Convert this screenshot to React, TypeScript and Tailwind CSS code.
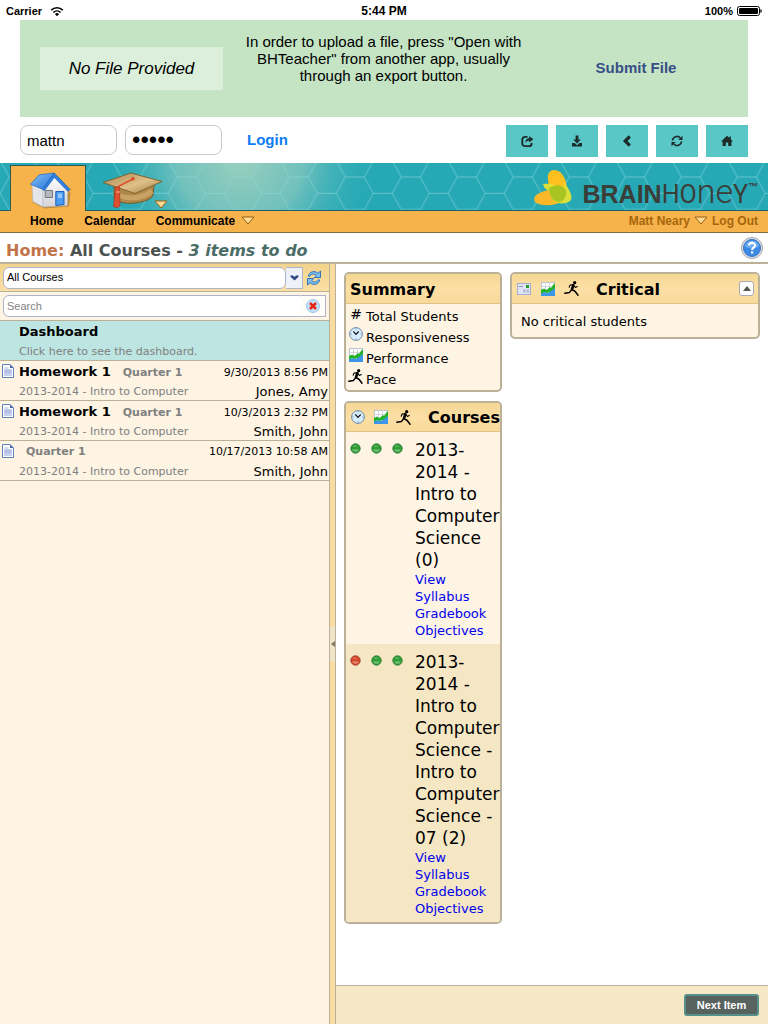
import type { ReactNode } from "react";

const verdana = "font-['DejaVu_Sans',sans-serif]";
const arial = "font-['Liberation_Sans',Arial,sans-serif]";

function Wifi() {
  return (
    <svg width="14" height="11" viewBox="0 0 14 11" fill="none" stroke="#000" aria-hidden="true">
      <path d="M1.2 4.1a8.4 8.4 0 0 1 11.6 0" strokeWidth="1.6" />
      <path d="M3.4 6.5a5.2 5.2 0 0 1 7.2 0" strokeWidth="1.6" />
      <path d="M7 10.2 4.9 8a3 3 0 0 1 4.2 0z" fill="#000" stroke="none" />
    </svg>
  );
}

function Battery() {
  return (
    <svg width="25" height="10" viewBox="0 0 25 10" aria-hidden="true">
      <rect x="0.5" y="0.5" width="22" height="9" rx="2" fill="none" stroke="#000" />
      <rect x="2" y="2" width="19" height="6" rx="1" />
      <path d="M23.4 3q1.4.6 1.4 2t-1.4 2z" />
    </svg>
  );
}

function ShareGlyph() {
  return (
    <svg width="13" height="13" viewBox="0 0 13 13" aria-hidden="true">
      <path d="M6.5 1.9H4A2.7 2.7 0 0 0 1.3 4.6v3.8A2.7 2.7 0 0 0 4 11.1h4.2a2.4 2.4 0 0 0 2.4-2.4V8" fill="none" stroke="#1d2b2b" strokeWidth="1.9" />
      <path d="M8.3 1 12.4 4.3 8.3 7.6V5.7C6.5 5.7 5.3 6.3 4.3 8 4.3 5 5.8 3.1 8.3 2.9z" fill="#1d2b2b" />
    </svg>
  );
}
function SaveGlyph() {
  return (
    <svg width="12" height="12" viewBox="0 0 12 12" fill="#1d2b2b" aria-hidden="true">
      <path d="M4.6 .5h2.8v4h2.4L6 8.6 2.2 4.5h2.4z" />
      <path d="M1 8h2.6L6 10.2 8.4 8H11v3.5H1z" />
    </svg>
  );
}
function BackGlyph() {
  return (
    <svg width="12" height="12" viewBox="0 0 12 12" fill="none" stroke="#1d2b2b" strokeWidth="3.2" aria-hidden="true">
      <path d="M8.8 1.4 4.2 6l4.6 4.6" />
    </svg>
  );
}
function RefreshGlyph() {
  return (
    <svg width="12" height="12" viewBox="0 0 12 12" fill="none" stroke="#1d2b2b" strokeWidth="1.7" aria-hidden="true">
      <path d="M1.5 5.5A4.5 4.5 0 0 1 9.3 3" />
      <path d="M10.5 6.5A4.5 4.5 0 0 1 2.7 9" />
      <path d="M11.5 .8v4.2H7.3zM.5 11.2V7h4.2z" fill="#1d2b2b" stroke="none" />
    </svg>
  );
}
function HomeGlyph() {
  return (
    <svg width="12" height="12" viewBox="0 0 12 12" fill="#1d2b2b" aria-hidden="true">
      <path d="M6 .8 8.3 3V1.5h1.6v3L12 6.6h-1.6V11H7.2V7.5H4.8V11H1.6V6.6H0z" />
    </svg>
  );
}

function House() {
  return (
    <svg width="42" height="37" viewBox="0 0 42 37" aria-hidden="true">
      <defs>
        <linearGradient id="roof" x1="0" y1="0" x2="1" y2="1">
          <stop offset="0" stopColor="#8cc4f8" />
          <stop offset="1" stopColor="#1b6fd9" />
        </linearGradient>
        <linearGradient id="wall" x1="0" y1="0" x2="0" y2="1">
          <stop offset="0" stopColor="#ffffff" />
          <stop offset="1" stopColor="#d3d3d8" />
        </linearGradient>
      </defs>
      <path d="M3 30 15 36.5 40 34.5 41.5 20z" fill="#7a5a25" opacity=".45" />
      <path d="M3 12.5 14 17v18L3.8 29.5z" fill="#e4e5ea" stroke="#a9a9ae" strokeWidth=".5" />
      <path d="M14 35V17L25.3 4.5 38.5 17v16.5z" fill="url(#wall)" stroke="#b3b3b8" strokeWidth=".5" />
      <path d="M16.2 18.5h7.3v7h-7.3z" fill="#b4b8be" stroke="#6a6d72" strokeWidth=".9" />
      <path d="M26.8 19.5h8.2v13l-8.2 1z" fill="#4a9bf2" stroke="#1a5fb8" strokeWidth="1" />
      <path d="M28.8 21.5h4.2v4.5h-4.2z" fill="#93c8fa" />
      <path d="M1.5 12.2 10.3 2.8 25.3 1 13.7 17.3z" fill="url(#roof)" stroke="#1c67c2" strokeWidth=".7" />
      <path d="M25.3 1 41.2 17.5 39 19.5 25.3 5.5 15.3 18.8 13.7 17.3z" fill="#2f82e4" stroke="#1656ab" strokeWidth=".6" />
    </svg>
  );
}

function GradCap() {
  return (
    <svg width="62" height="37" viewBox="0 0 62 37" aria-hidden="true">
      <defs>
        <linearGradient id="board" x1="0" y1="0" x2="1" y2="1">
          <stop offset="0" stopColor="#a8834a" />
          <stop offset=".55" stopColor="#dfc089" />
          <stop offset="1" stopColor="#a27a3c" />
        </linearGradient>
      </defs>
      <path d="M12 14v12c5 5 13 6 21 5 9-1 17-4 18-8l1-10z" fill="#b08848" stroke="#6b4a1b" strokeWidth=".8" />
      <path d="M14 22c8 5 25 6 36-3" fill="none" stroke="#d3af72" strokeWidth="5" opacity=".7" />
      <path d="M1 10.5 29 1l31 8.5-27 12z" fill="url(#board)" stroke="#7d5c2b" strokeWidth=".9" />
      <path d="M31 7 16 14.5 15 24" fill="none" stroke="#e0512c" strokeWidth="1.6" />
      <circle cx="31" cy="6.8" r="1.7" fill="#d94423" />
      <path d="M13.5 15h4l.5 19c-2 2-5 1.5-6.5.5z" fill="#dd5030" stroke="#a42e14" strokeWidth=".6" />
      <path d="M14 20h4" stroke="#f3b08a" />
    </svg>
  );
}

function Drop() {
  return (
    <svg width="14" height="9" viewBox="0 0 14 9" aria-hidden="true">
      <path d="M1 1h12L7 8z" fill="#fddc92" stroke="#9a5f12" strokeWidth="1" strokeLinejoin="round" />
    </svg>
  );
}

function Bee() {
  return (
    <svg width="38" height="37" viewBox="0 0 38 37" aria-hidden="true">
      <ellipse cx="16" cy="28.5" rx="16" ry="7.5" transform="rotate(-8 16 28.5)" fill="#fdb82a" />
      <path d="M14 10C13 3 18-1 24 2c7 3 10 14 8 22-3 6-8 6-11 1-3-4-7-9-7-15z" fill="#fdc01f" />
      <path d="M9 15c6-1 13 0 19 6 2-2 3-5 2-8 5 7 10 15 6 19-5 4-14 3-18-2-2-3-2-7-4-9-2 0-4-2-5-6z" fill="#e3e233" opacity=".95" />
      <path d="M15 19c6-4 13-4 17 2 1 6-2 12-7 12-6 0-10-6-10-14z" fill="#a8c523" />
    </svg>
  );
}

function HexBackdrop() {
  return (
    <svg className="absolute inset-0 h-full w-full" aria-hidden="true">
      <defs>
        <pattern id="hex" x="9.3" y="14" width="56" height="32.66" patternUnits="userSpaceOnUse">
          <path
            d="M0 0H19L28 16.33H47L56 0M0 32.66H19L28 16.33M47 16.33L56 32.66"
            fill="none"
            stroke="#8fd8dc"
            strokeWidth=".9"
            opacity=".65"
          />
        </pattern>
        <radialGradient id="glow" gradientUnits="userSpaceOnUse" cx="240" cy="-5" r="140">
          <stop offset="0" stopColor="#9ad0bd" />
          <stop offset=".45" stopColor="#7fc5be" stopOpacity=".85" />
          <stop offset="1" stopColor="#26a9b5" stopOpacity="0" />
        </radialGradient>
      </defs>
      <rect width="100%" height="100%" fill="url(#glow)" />
      <rect width="100%" height="100%" fill="url(#hex)" />
    </svg>
  );
}

function Help() {
  return (
    <svg width="22" height="22" viewBox="0 0 22 22" aria-hidden="true">
      <circle cx="11" cy="11" r="10.5" fill="#e4e4e6" stroke="#a3a3a8" />
      <circle cx="11" cy="11" r="8.5" fill="#3b8be6" stroke="#3472c4" />
      <path d="M3.5 9a8 8 0 0 1 15 0c-4 3-11 3-15 0z" fill="#8fc2f7" opacity=".6" />
      <path d="M8 8.6C8 5 14 5 14 8.5c0 2.2-2.9 2.2-2.9 4.5" fill="none" stroke="#fff" strokeWidth="2.1" />
      <rect x="10" y="14.3" width="2.2" height="2.2" fill="#fff" />
    </svg>
  );
}

function Sync() {
  return (
    <svg width="16" height="16" viewBox="0 0 16 16" aria-hidden="true">
      <path d="M2.3 6C3.5 1.3 9 .3 12 3.3L14.5 1v6.5H8.3L10.2 5.3C8.2 3.3 5.3 3.9 3.8 6.3z" fill="#7fc0f3" stroke="#2469b4" strokeWidth=".9" strokeLinejoin="round" />
      <path d="M13.7 10C12.5 14.7 7 15.7 4 12.7L1.5 15V8.5h6.2L5.8 10.7c2 2 4.9 1.4 6.4-1z" fill="#7fc0f3" stroke="#2469b4" strokeWidth=".9" strokeLinejoin="round" />
    </svg>
  );
}

function Clear() {
  return (
    <svg width="14" height="14" viewBox="0 0 14 14" aria-hidden="true">
      <circle cx="7" cy="7" r="6.5" fill="#c3e2fa" stroke="#9cc6ec" />
      <path d="m4 4 6 6m0-6-6 6" stroke="#e8261a" strokeWidth="2.6" />
    </svg>
  );
}

function Page() {
  return (
    <svg width="12" height="14" viewBox="0 0 12 14" aria-hidden="true">
      <path d="M.5.5h7.5L11.5 4v9.5H.5z" fill="#fff" stroke="#5f7fbd" />
      <path d="M2 5.5h8v6.5H2z" fill="#c3d0ee" />
      <path d="M8 .5V4h3.5z" fill="#4667aa" />
      <path d="M2.5 4h4M2.5 6h7M2.5 8h7" stroke="#94a9d6" strokeWidth=".8" />
    </svg>
  );
}

function Clock() {
  return (
    <svg width="14" height="14" viewBox="0 0 14 14" aria-hidden="true">
      <circle cx="7" cy="7" r="6.4" fill="#d4ecfb" stroke="#7288a6" />
      <path d="M4.3 4.3 7 7.3l2.7-2.8" fill="none" stroke="#111" strokeWidth="1.2" />
      <path d="M7 1.5v1M7 11.5v1M1.5 7h1M11.5 7h1" stroke="#6f8fb4" />
    </svg>
  );
}

function Chart() {
  return (
    <svg width="14" height="14" viewBox="0 0 14 14" aria-hidden="true">
      <rect x=".5" y=".5" width="13" height="13" fill="#fff" stroke="#b9bfd0" />
      <path d="M4.5 0v9M8.5 0v9M0 4.5h14" stroke="#d2d6e2" />
      <path d="M0 14v-3l4-1 3 1 6-5h1v8z" fill="#3c97e8" />
      <path d="M0 8l3-1.5L5.5 8 9 5l1 1 3-4.5 1 1V6L9.5 9.5 6 11l-2-1-4 1.5z" fill="#22b32a" />
    </svg>
  );
}

function Runner() {
  return (
    <svg width="16" height="15" viewBox="0 0 16 15" fill="none" stroke="#000" strokeLinecap="round" strokeLinejoin="round" aria-hidden="true">
      <circle cx="10.7" cy="1.7" r="1.6" fill="#000" stroke="none" />
      <path d="M9.3 4.2 8 8.3" strokeWidth="2.6" />
      <path d="M8.8 3.8 6 4.1 5.2 6.2M10 4.5l1.3 2 2-.9" strokeWidth="1.1" />
      <path d="M7.7 8.6 5.5 11.4 .8 12.2" strokeWidth="1.5" />
      <path d="M8.3 8.6l2.9 1.9 2.8 3.7" strokeWidth="1.5" />
    </svg>
  );
}

function Contact() {
  return (
    <svg width="14" height="12" viewBox="0 0 14 12" aria-hidden="true">
      <rect x=".5" y=".5" width="13" height="11" fill="#dfe3f6" stroke="#a5acd0" />
      <rect x="9" y="2" width="3" height="3" fill="#1fa02a" />
      <path d="M2 3.5h4" stroke="#9299b8" />
      <path d="M6 6.5h2.5v3H6zM9.5 6.5H12v3H9.5z" fill="#b4bad6" />
    </svg>
  );
}

function Dot({ red = false }: { red?: boolean }) {
  return (
    <svg width="11" height="11" viewBox="0 0 11 11" aria-hidden="true">
      <circle cx="5.5" cy="5.5" r="4.7" fill={red ? "#d8492b" : "#2f9e35"} stroke={red ? "#8d2c18" : "#22702a"} strokeWidth=".8" />
      <path d="M2 6.5h7a3.8 3.8 0 0 1-7 0z" fill="#fff" opacity=".35" />
      <ellipse cx="5" cy="3" rx="2" ry="1" fill="#fff" opacity=".2" />
    </svg>
  );
}

const tools: [string, () => ReactNode][] = [
  ["Share", ShareGlyph],
  ["Download", SaveGlyph],
  ["Back", BackGlyph],
  ["Refresh", RefreshGlyph],
  ["Home", HomeGlyph],
];

const items = [
  { title: "Homework 1", date: "9/30/2013 8:56 PM", who: "Jones, Amy" },
  { title: "Homework 1", date: "10/3/2013 2:32 PM", who: "Smith, John" },
  { title: "", date: "10/17/2013 10:58 AM", who: "Smith, John" },
];

const legend: [string, ReactNode][] = [
  ["Total Students", <span className="text-sm leading-4">#</span>],
  ["Responsiveness", <Clock />],
  ["Performance", <Chart />],
  ["Pace", <Runner />],
];

const courses = [
  { rest: "2014 - Intro to Computer Science (0)", red: false, bg: "bg-[#fdf4e3]" },
  { rest: "2014 - Intro to Computer Science - Intro to Computer Science - 07 (2)", red: true, bg: "bg-[#f5e7c3]" },
];

const card = "overflow-hidden rounded-[5px] border-2 border-[#bbb199] bg-[#fdf4e3]";
const cardHead = "flex items-center border-b border-[#dcc48c] bg-linear-to-b from-[#f5d894] via-[#fcdfa5] to-[#f8da98]";
const cardTitle = "pt-0.5 text-base font-bold leading-5";

export default function App() {
  return (
    <div className={`flex min-h-screen flex-col bg-white text-black ${arial}`}>
      <div className="grid h-5 grid-cols-3 items-center px-1.5 pt-0.5 text-xs font-bold leading-4">
        <div className="flex items-center gap-2 text-[11px]">Carrier <Wifi /></div>
        <div className="text-center">5:44 PM</div>
        <div className="flex items-center justify-end gap-1 text-[11px]">100% <Battery /></div>
      </div>

      <section className="mx-5 flex h-[97px] bg-[#c4e4c4]">
        <div className="flex w-[223px] items-center pl-5">
          <div className="flex h-[43px] w-[183px] items-center justify-center bg-[#dcefdb] pt-px text-[17px] italic">No File Provided</div>
        </div>
        <p className="flex-1 whitespace-nowrap pt-[13px] text-center text-[15px] leading-[17px]">
          In order to upload a file, press "Open with
          <br />
          BHTeacher" from another app, usually
          <br />
          through an export button.
        </p>
        <button className="w-[224px] text-[15px] font-bold text-[#374f87]">Submit File</button>
      </section>

      <form className="flex h-[46px] items-start px-5 pt-2" onSubmit={(e) => e.preventDefault()}>
        <input aria-label="User name" defaultValue="mattn" className="h-[30px] w-[97px] rounded-lg border border-[#c9c9c9] px-1.5 text-[15px]" />
        <input aria-label="Password" type="password" defaultValue="abcde" className="ml-2 h-[30px] w-[97px] rounded-lg border border-[#c9c9c9] px-1.5 text-2xl" />
        <button className="ml-[25px] h-[30px] text-[15px] font-bold text-[#0b7cf5]">Login</button>
        <div className="ml-auto flex gap-2">
          {tools.map(([name, Glyph]) => (
            <button key={name} type="button" aria-label={name} className="flex h-8 w-[42px] items-center justify-center bg-[#59c7c5]">
              <Glyph />
            </button>
          ))}
        </div>
      </form>

      <header className="text-xs font-bold">
        <div className="relative flex h-12 bg-[#26a9b5]">
          <HexBackdrop />
          <div className="absolute inset-x-0 bottom-0 h-px bg-[#1c5f68]" />
          <a href="#home" aria-label="Home" className="relative ml-2.5 mt-0.5 flex w-[76px] justify-center border-x border-t border-[#315a50] bg-[#f6b24b] pl-1 pt-1.5">
            <House />
          </a>
          <a href="#courses" aria-label="Courses" className="relative ml-4 flex items-end pb-0.5">
            <GradCap />
            <span className="-ml-2.5"><Drop /></span>
          </a>
          <div className="relative ml-auto flex items-start pr-2.5 pt-1.5 text-[#3a3d38]">
            <Bee />
            <div className="ml-2.5 mt-1.5 flex items-baseline text-[25px] leading-8">
              <span>BRAIN</span>
              <span className="font-['Roboto',sans-serif] font-normal">HO</span>
              <span className="font-['Roboto',sans-serif] text-[34px] font-light leading-8">ne</span>
              <span className="font-['Roboto',sans-serif] font-normal">Y</span>
              <span className="self-start pt-1 text-[10px] leading-4">™</span>
            </div>
          </div>
        </div>
        <nav className="flex h-[22px] items-center border-b border-[#7d6a42] bg-[#f6b24b] pb-0.5 pl-[30px] pr-2.5 leading-4">
          <a href="#home">Home</a>
          <a href="#calendar" className="ml-[21px]">Calendar</a>
          <a href="#communicate" className="ml-5 flex items-center gap-1.5">Communicate <Drop /></a>
          <a href="#user" className="ml-auto flex items-center gap-1 text-[#a7660b]">Matt Neary <Drop /></a>
          <a href="#logout" className="ml-1 text-[#a7660b]">Log Out</a>
        </nav>
      </header>

      <div className={`flex h-[31px] items-center justify-between border-b-2 border-[#bbb199] pl-1.5 pr-[5px] ${verdana}`}>
        <h1 className="pt-1.5 text-base font-bold leading-5 text-[#4c5251]">
          <span className="text-[#c17449]">Home:</span> All Courses - <em className="text-[#4c6d67]">3 items to do</em>
        </h1>
        <button aria-label="Help"><Help /></button>
      </div>

      <div className={`flex flex-1 ${verdana}`}>
        <aside className="w-[330px] shrink-0 border-r border-[#bbb199] bg-[#fdf4e3]">
          <div className={`flex h-7 items-center border-b border-[#bbb199] bg-linear-to-b from-[#f2d48d] to-[#fcdfa3] pl-[3px] ${arial}`}>
            <div className="relative w-[300px]">
              <select aria-label="Courses" className="block h-[22px] w-[283px] appearance-none rounded-md border border-[#b1b3cb] bg-white px-[3px] text-[11px]">
                <option>All Courses</option>
              </select>
              <span className="pointer-events-none absolute inset-y-0 right-0 flex w-[17px] items-center justify-center border border-l-0 border-[#b1b3cb] bg-[#eef1fa]">
                <svg width="9" height="6" viewBox="0 0 9 6" aria-hidden="true"><path d="M.5.5h2.5l1.5 1.5L6 .5h2.5v1.3l-4 3.7-4-3.7z" fill="#2d4580" /></svg>
              </span>
            </div>
            <button aria-label="Reload" className="ml-[3px]"><Sync /></button>
          </div>
          <div className={`flex h-[29px] items-center border-b border-[#bbb199] px-[3px] ${arial}`}>
            <input aria-label="Search" placeholder="Search" className="h-[22px] w-[302px] rounded-md border border-[#b1b3cb] bg-white px-[3px] text-[11px] placeholder:text-[#858585]" />
            <button aria-label="Clear search" className="-ml-1 flex h-[22px] flex-1 items-center justify-center border border-l-0 border-[#b1b3cb] bg-[#fffdfa]"><Clear /></button>
          </div>
          <a href="#dashboard" className="block h-10 border-b border-[#bbb199] bg-[#bde5e1] pl-[19px]">
            <strong className="block text-[13px] leading-[22px]">Dashboard</strong>
            <span className="block text-[11px] leading-[18px] text-[#808080]">Click here to see the dashboard.</span>
          </a>
          {items.map((it) => (
            <a key={it.date} href="#item" className="flex h-10 border-b border-[#bbb199] pl-0.5 pr-px">
              <span className="w-[17px] shrink-0 pt-[3px]"><Page /></span>
              <span className="flex-1">
                <span className="flex h-[21px] items-baseline whitespace-nowrap leading-[21px]">
                  {it.title && <strong className="mr-[5px] text-[13px]">{it.title}</strong>}
                  <strong className="ml-[7px] text-[11px] text-[#808080]">Quarter 1</strong>
                  <span className="ml-auto text-[11px]">{it.date}</span>
                </span>
                <span className="flex h-5 items-center justify-between whitespace-nowrap leading-5">
                  <span className="text-[11px] text-[#808080]">2013-2014 - Intro to Computer</span>
                  <span className="text-[13px]">{it.who}</span>
                </span>
              </span>
            </a>
          ))}
        </aside>

        <div className="flex w-1.5 shrink-0 items-center border-r border-[#bbb199] bg-[#fbdca0]">
          <button aria-label="Collapse sidebar" className="flex h-9 w-full items-center justify-center rounded-l-sm bg-[#efe3c8]">
            <svg width="4" height="6" viewBox="0 0 4 6" aria-hidden="true"><path d="M4 0v6L0 3z" fill="#7d7663" /></svg>
          </button>
        </div>

        <main className="flex min-w-0 flex-1 flex-col">
          <div className="flex flex-1 items-start gap-2 p-2">
            <div className="flex w-[158px] shrink-0 flex-col gap-[9px]">
              <section className={card}>
                <div className={`${cardHead} h-[30px] pl-1`}>
                  <h2 className={cardTitle}>Summary</h2>
                </div>
                <ul className="pb-0.5 text-[13px] leading-[21px]">
                  {legend.map(([label, icon]) => (
                    <li key={label} className="flex h-[21px]">
                      <span className="flex w-5 justify-center pt-0.5">{icon}</span>
                      <span className="pt-0.5">{label}</span>
                    </li>
                  ))}
                </ul>
              </section>

              <section className={card}>
                <div className={`${cardHead} h-[29px] pl-[5px]`}>
                  <Clock />
                  <span className="ml-[9px]"><Chart /></span>
                  <span className="ml-2"><Runner /></span>
                  <h2 className={`ml-4 ${cardTitle}`}>Courses</h2>
                </div>
                {courses.map((c) => (
                  <div key={c.rest} className={`flex pb-[5px] pl-1 pt-[7px] ${c.bg}`}>
                    <div className="flex w-[65px] shrink-0 gap-2.5 pt-1">
                      <Dot red={c.red} />
                      <Dot />
                      <Dot />
                    </div>
                    <div className="w-[85px] text-[13px] leading-[17px]">
                      <h3 className="text-[17px] leading-[22px]">2013-<wbr />{c.rest}</h3>
                      {["View Syllabus", "Gradebook", "Objectives"].map((l) => (
                        <a key={l} href="#course" className="block w-[75px] text-[#0000ee]">{l}</a>
                      ))}
                    </div>
                  </div>
                ))}
              </section>
            </div>

            <section className={`${card} flex-1`}>
              <div className={`${cardHead} h-[30px] pl-[5px] pr-1`}>
                <Contact />
                <span className="ml-2.5"><Chart /></span>
                <span className="ml-[9px]"><Runner /></span>
                <h2 className={`ml-4 ${cardTitle}`}>Critical</h2>
                <button aria-label="Collapse" className="ml-auto flex h-[15px] w-[15px] items-center justify-center rounded-[3px] border border-[#a9a9b5] bg-white">
                  <svg width="8" height="5" viewBox="0 0 8 5" aria-hidden="true"><path d="M0 5 4 0l4 5z" fill="#555" /></svg>
                </button>
              </div>
              <p className="px-[9px] pb-[7px] pt-[9px] text-[13px] leading-[17px]">No critical students</p>
            </section>
          </div>
          <footer className={`flex h-[39px] items-center justify-end border-t border-[#bbb199] bg-[#f5e8c4] pr-[9px] ${arial}`}>
            <button className="h-[22px] w-[75px] rounded-[3px] border-2 border-[#55908b] bg-[#58625f] text-[11px] font-bold leading-4 text-white">Next Item</button>
          </footer>
        </main>
      </div>
    </div>
  );
}
